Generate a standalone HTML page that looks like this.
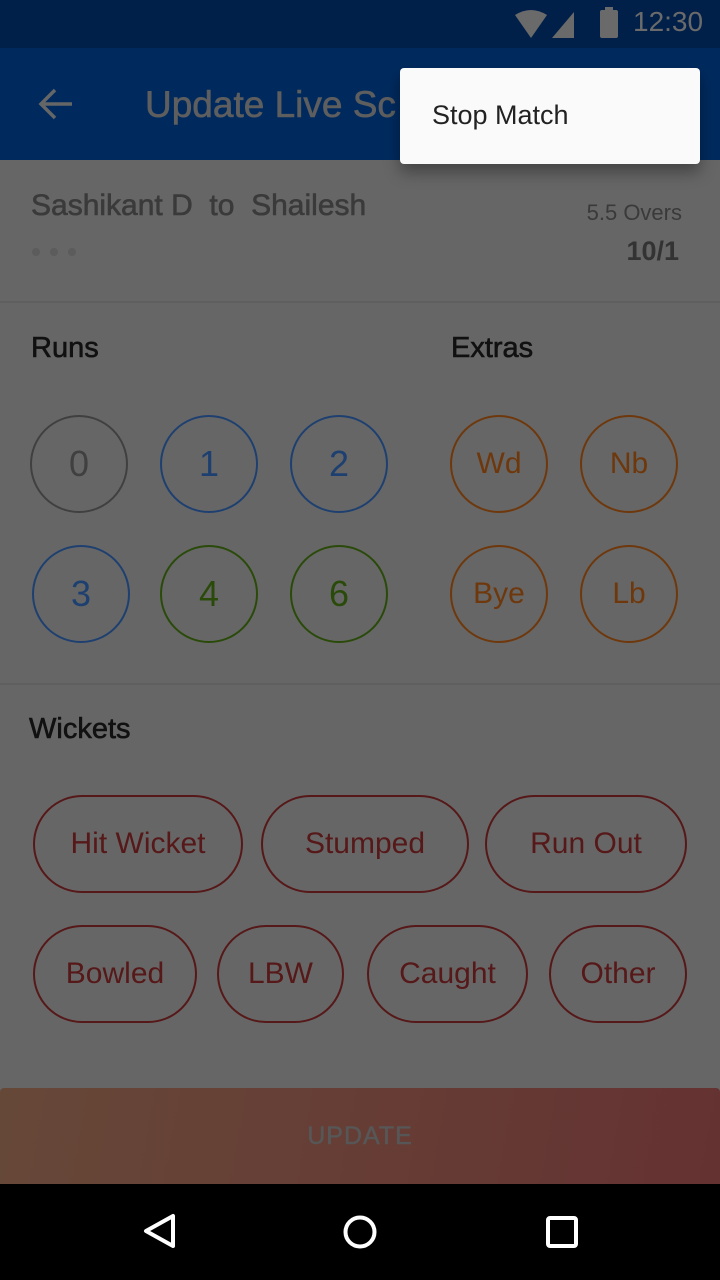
<!DOCTYPE html>
<html><head><meta charset="utf-8"><style>
*{margin:0;padding:0;box-sizing:border-box}
body{width:720px;height:1280px;overflow:hidden;background:#666;font-family:"Liberation Sans",sans-serif;position:relative}
.a{position:absolute}
.m{-webkit-text-stroke:0.6px currentColor}
.c{position:absolute;width:98px;height:98px;border-radius:50%;border:2px solid;display:flex;align-items:center;justify-content:center;font-size:36px}
.o{border-color:#6e380c;color:#6e380c;font-size:30px}
.p{position:absolute;height:98px;border-radius:49px;border:2px solid #561818;color:#561818;display:flex;align-items:center;justify-content:center;font-size:30px;top:0}
</style></head><body>
<div class="a" style="left:0;top:0;width:720px;height:48px;background:#00204a"></div>
<svg class="a" style="left:512px;top:8px" width="80" height="32" viewBox="0 0 80 32">
<path d="M3 7 Q19 -3 35 7 L19 30Z" fill="#6a6a6a"/>
<path d="M40 30 L62 4 L62 30Z" fill="#6a6a6a"/>
</svg>
<div class="a" style="left:600px;top:10px;width:18px;height:28px;background:#6a6a6a;border-radius:2px"></div>
<div class="a" style="left:605px;top:7px;width:8px;height:4px;background:#6a6a6a"></div>
<div class="a" style="left:633px;top:6px;font-size:28px;color:#6a6a6a">12:30</div>
<div class="a" style="left:0;top:48px;width:720px;height:112px;background:#002a5e"></div>
<svg class="a" style="left:38px;top:86px" width="36" height="36" viewBox="0 0 36 36"><path d="M34 18H5M17 4L3 18L17 32" stroke="#666" stroke-width="3.5" fill="none"/></svg>
<div class="a m" style="left:145px;top:84px;font-size:37px;color:#5e5e5e;white-space:nowrap">Update Live Sc</div>

<div class="a m" style="left:31px;top:189px;font-size:30px;color:#3a3a3a;white-space:nowrap">Sashikant D &nbsp;to &nbsp;Shailesh</div>
<div class="a" style="left:32px;top:248px;width:8px;height:8px;border-radius:50%;background:#5c5c5c"></div>
<div class="a" style="left:50px;top:248px;width:8px;height:8px;border-radius:50%;background:#5c5c5c"></div>
<div class="a" style="left:68px;top:248px;width:8px;height:8px;border-radius:50%;background:#5c5c5c"></div>
<div class="a" style="right:38px;top:200px;font-size:22px;color:#3a3a3a">5.5 Overs</div>
<div class="a" style="right:41px;top:236px;font-size:27px;color:#333;font-weight:bold">10/1</div>
<div class="a" style="left:0;top:301px;width:720px;height:2px;background:#5f5f5f"></div>

<div class="a m" style="left:31px;top:332px;font-size:29px;color:#111">Runs</div>
<div class="a m" style="left:451px;top:332px;font-size:29px;color:#111">Extras</div>

<div class="c" style="left:30px;top:415px;border-color:#404040;color:#404040">0</div>
<div class="c" style="left:160px;top:415px;border-color:#1e4070;color:#1e4070">1</div>
<div class="c" style="left:290px;top:415px;border-color:#1e4070;color:#1e4070">2</div>
<div class="c o" style="left:450px;top:415px">Wd</div>
<div class="c o" style="left:580px;top:415px">Nb</div>
<div class="c" style="left:32px;top:545px;border-color:#1e4070;color:#1e4070">3</div>
<div class="c" style="left:160px;top:545px;border-color:#2a4a0a;color:#2a4a0a">4</div>
<div class="c" style="left:290px;top:545px;border-color:#2a4a0a;color:#2a4a0a">6</div>
<div class="c o" style="left:450px;top:545px">Bye</div>
<div class="c o" style="left:580px;top:545px">Lb</div>

<div class="a" style="left:0;top:683px;width:720px;height:2px;background:#5f5f5f"></div>
<div class="a m" style="left:29px;top:713px;font-size:29px;color:#111">Wickets</div>

<div class="a" style="left:0;top:795px;width:720px;height:98px">
<div class="p" style="left:33px;width:210px">Hit Wicket</div>
<div class="p" style="left:261px;width:208px">Stumped</div>
<div class="p" style="left:485px;width:202px">Run Out</div>
</div>
<div class="a" style="left:0;top:925px;width:720px;height:98px">
<div class="p" style="left:33px;width:164px">Bowled</div>
<div class="p" style="left:217px;width:127px">LBW</div>
<div class="p" style="left:367px;width:161px">Caught</div>
<div class="p" style="left:549px;width:138px">Other</div>
</div>

<div class="a" style="left:0;top:1088px;width:720px;height:96px;border-radius:4px 4px 0 0;background:linear-gradient(100deg,#664838,#653232);display:flex;align-items:center;justify-content:center;font-size:25px;color:#575757;letter-spacing:1px;-webkit-text-stroke:0.5px #575757">UPDATE</div>

<div class="a" style="left:0;top:1184px;width:720px;height:96px;background:#000"></div>
<svg class="a" style="left:0;top:1184px" width="720" height="96" viewBox="0 0 720 96">
<path d="M173 32 L173 62 L146 47Z" stroke="#fff" stroke-width="4" fill="none" stroke-linejoin="round"/>
<circle cx="360" cy="48" r="14.5" stroke="#fff" stroke-width="4" fill="none"/>
<rect x="548" y="34" width="28" height="28" rx="2" stroke="#fff" stroke-width="4" fill="none"/>
</svg>

<div class="a" style="left:400px;top:68px;width:300px;height:96px;background:#fafafa;border-radius:4px;box-shadow:0 8px 16px rgba(0,0,0,0.35)"></div>
<div class="a" style="left:432px;top:100px;font-size:27px;color:#222">Stop Match</div>
</body></html>
